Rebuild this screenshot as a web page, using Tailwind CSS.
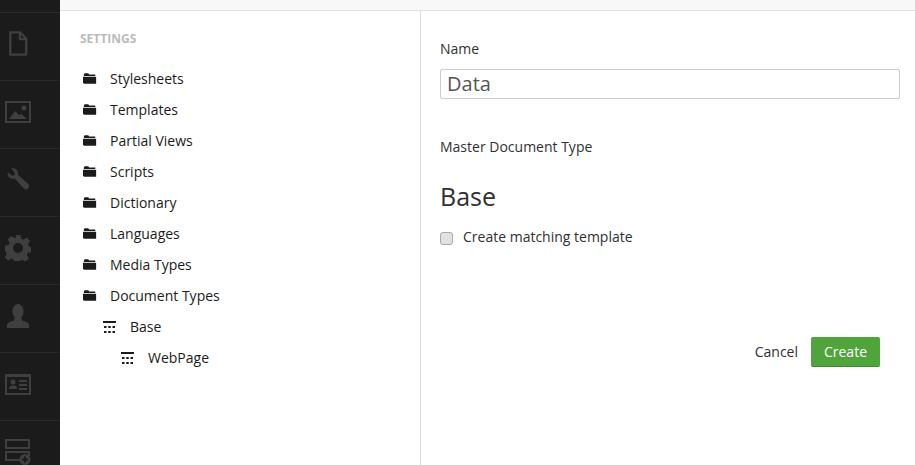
<!DOCTYPE html>
<html lang="en">
<head>
  <meta charset="UTF-8" />
  <title>Settings</title>
  <script src="https://cdn.jsdelivr.net/npm/@tailwindcss/browser@4"></script>
</head>
<body class="bg-white h-[465px] w-[915px] overflow-hidden flex font-['Open_Sans',sans-serif] text-[#303030]">

<!-- sections -->
<nav class="w-[60px] h-[465px] shrink-0 bg-[#1b1b1b] overflow-hidden text-[#3f3f3f]">
  <div class="h-[13px] border-b border-[#292929]"></div>
  <div class="h-[68px] border-b border-[#292929] flex items-center pl-[8px] pb-[6px]">
    <svg width="20" height="25" viewBox="0 0 20 26" fill="none" stroke="currentColor" stroke-width="2.400" stroke-linejoin="round"><path d="M2 1.500h10.500l6 6.500v16.500h-16.500z"/><path d="M12 1.500v7h6.500"/></svg>
  </div>
  <div class="h-[68px] border-b border-[#292929] flex items-center pl-[5px] pb-[5px]">
    <svg width="26" height="22" viewBox="0 0 26 22" fill="currentColor"><path d="M0 0h26v22H0zM2 2v18h22V2z" fill-rule="evenodd"/><circle cx="19" cy="7" r="2.500"/><path d="M4 18l6-8 4 4 2-1 6 5z"/></svg>
  </div>
  <div class="h-[68px] border-b border-[#292929] flex items-center pl-[6px] pb-[6px]">
    <svg width="24" height="24" viewBox="0 0 26 26" fill="currentColor"><path d="M2 4.500l4.500 4 3-1-.5-3.500-3.500-3.500c4-1.300 8.500 2 7.500 7l11 9.500c2 2 1 4.500-.5 5.500s-3.500.8-4.500-.5l-9.500-10.500c-5 1-8.800-3-7.500-7z"/></svg>
  </div>
  <div class="h-[68px] border-b border-[#292929] flex items-center pl-[5px] pb-[6px]">
    <svg width="26" height="26" viewBox="0 0 26 26" fill="currentColor"><path fill-rule="evenodd" d="M10.500 0h5l.7 3.700 2.300 1 3.100-2.100 3.500 3.500-2.100 3.100 1 2.300 2.500.7v5l-3.700.7-1 2.300 2.100 3.100-3.500 3.500-3.100-2.100-2.300 1-.7 2.500h-5l-.7-3.700-2.300-1-3.100 2.100-3.500-3.500 2.100-3.100-1-2.300L0 15.500v-5l3.700-.7 1-2.300-2.100-3.100 3.500-3.500 3.100 2.100 2.300-1zM13 8a5 5 0 1 0 0 10 5 5 0 0 0 0-10z"/></svg>
  </div>
  <div class="h-[68px] border-b border-[#292929] flex items-center pl-[6px] pb-[5px]">
    <svg width="24" height="24" viewBox="0 0 24 26" fill="currentColor"><ellipse cx="12" cy="8" rx="6" ry="8"/><path d="M8 15h8v2.500c3 1.500 8 2 8 5.500v3H0v-3c0-3.500 5-4 8-5.500z"/></svg>
  </div>
  <div class="h-[68px] border-b border-[#292929] flex items-center pl-[5px] pb-[4px]">
    <svg width="26" height="21" viewBox="0 0 26 21" fill="currentColor"><path fill-rule="evenodd" d="M0 0h26v21H0zM2 3v16h22V3z"/><circle cx="8" cy="8" r="2.500"/><path d="M4 15c0-3 2-3.500 4-3.500s4 .5 4 3.500zM14 6h8v2h-8zM14 10h8v2h-8zM14 14h8v2h-8z"/></svg>
  </div>
  <div class="h-[68px] flex items-center pl-[5px] pb-[6px]">
    <svg width="26" height="26" viewBox="0 0 26 26" fill="currentColor"><path fill-rule="evenodd" d="M0 0h25v10H0zM2 2v6h21V2z"/><path d="M0 12h25v5h-2v-3H2v6h13v2H0z"/><circle cx="20" cy="20.500" r="5.500"/><path d="M19 17.500h2v2h2v2h-2v2h-2v-2h-2v-2h2z" fill="#1b1b1b"/></svg>
  </div>
</nav>

<div class="flex-1 flex flex-col min-w-0">
  <div class="h-[11px] shrink-0 bg-[#f8f8f8] border-b border-[#e0e0e0]"></div>
  <div class="flex flex-1 min-h-0">

    <!-- tree -->
    <aside class="w-[361px] shrink-0 border-r border-[#dddddd] pl-5 pt-[20px]">
      <h5 class="text-xs leading-[15px] font-bold text-[#bbbbbb]">SETTINGS</h5>
      <ul class="mt-[17px] text-sm text-[#1b1b1b]">
        <li class="h-[31px] flex items-center gap-[13px] pl-[3px]"><svg width="14" height="11" viewBox="0 0 16 12" fill="#1b1b1b"><path d="M2 0h4l1 1.500h7V3H1V1zM0 4h15v8H1.500L0 11z"/></svg>Stylesheets</li>
        <li class="h-[31px] flex items-center gap-[13px] pl-[3px]"><svg width="14" height="11" viewBox="0 0 16 12" fill="#1b1b1b"><path d="M2 0h4l1 1.500h7V3H1V1zM0 4h15v8H1.500L0 11z"/></svg>Templates</li>
        <li class="h-[31px] flex items-center gap-[13px] pl-[3px]"><svg width="14" height="11" viewBox="0 0 16 12" fill="#1b1b1b"><path d="M2 0h4l1 1.500h7V3H1V1zM0 4h15v8H1.500L0 11z"/></svg>Partial Views</li>
        <li class="h-[31px] flex items-center gap-[13px] pl-[3px]"><svg width="14" height="11" viewBox="0 0 16 12" fill="#1b1b1b"><path d="M2 0h4l1 1.500h7V3H1V1zM0 4h15v8H1.500L0 11z"/></svg>Scripts</li>
        <li class="h-[31px] flex items-center gap-[13px] pl-[3px]"><svg width="14" height="11" viewBox="0 0 16 12" fill="#1b1b1b"><path d="M2 0h4l1 1.500h7V3H1V1zM0 4h15v8H1.500L0 11z"/></svg>Dictionary</li>
        <li class="h-[31px] flex items-center gap-[13px] pl-[3px]"><svg width="14" height="11" viewBox="0 0 16 12" fill="#1b1b1b"><path d="M2 0h4l1 1.500h7V3H1V1zM0 4h15v8H1.500L0 11z"/></svg>Languages</li>
        <li class="h-[31px] flex items-center gap-[13px] pl-[3px]"><svg width="14" height="11" viewBox="0 0 16 12" fill="#1b1b1b"><path d="M2 0h4l1 1.500h7V3H1V1zM0 4h15v8H1.500L0 11z"/></svg>Media Types</li>
        <li class="h-[31px] flex items-center gap-[13px] pl-[3px]"><svg width="14" height="11" viewBox="0 0 16 12" fill="#1b1b1b"><path d="M2 0h4l1 1.500h7V3H1V1zM0 4h15v8H1.500L0 11z"/></svg>Document Types</li>
        <li class="h-[31px] flex items-center gap-[14px] pl-[23px]"><svg width="13" height="12" viewBox="0 0 13 12" fill="#1b1b1b"><path d="M0 0h13v2H0zM1 5h2.500v2H1zM5.250 5h2.500v2h-2.500zM9.500 5H12v2H9.500zM1 10h2.500v2H1zM5.250 10h2.500v2h-2.500zM9.500 10H12v2H9.500z"/></svg>Base</li>
        <li class="h-[31px] flex items-center gap-[14px] pl-[41px]"><svg width="13" height="12" viewBox="0 0 13 12" fill="#1b1b1b"><path d="M0 0h13v2H0zM1 5h2.500v2H1zM5.250 5h2.500v2h-2.500zM9.500 5H12v2H9.500zM1 10h2.500v2H1zM5.250 10h2.500v2h-2.500zM9.500 10H12v2H9.500z"/></svg>WebPage</li>
      </ul>
    </aside>

    <!-- create form -->
    <main class="flex-1 pl-[19px] pr-[15px] pt-[28px]">
      <label class="block text-sm leading-[20px]">Name</label>
      <input value="Data" class="block mt-[10px] w-full h-[30px] px-[6px] border border-[#cccccc] rounded-[2px] text-[20px] text-[#555555] font-['Open_Sans',sans-serif]" />
      <p class="mt-[38px] text-sm leading-[20px]">Master Document Type</p>
      <h3 class="mt-[23px] text-[25px] leading-[32px]">Base</h3>
      <label class="mt-[15px] flex items-center text-sm leading-[20px]">
        <span class="w-[13px] h-[13px] mt-[3px] rounded-[3px] border border-[#a8a8a8] bg-[#e2e2e2]"></span>
        <span class="ml-[10px]">Create matching template</span>
      </label>
      <div class="mt-[90px] mr-[20px] flex justify-end items-center gap-[13px] text-sm">
        <span>Cancel</span>
        <button class="w-[69px] h-[30px] rounded-[2px] bg-[#50a43c] border-b border-[#3f8a2e] text-white">Create</button>
      </div>
    </main>
  </div>
</div>

</body>
</html>
